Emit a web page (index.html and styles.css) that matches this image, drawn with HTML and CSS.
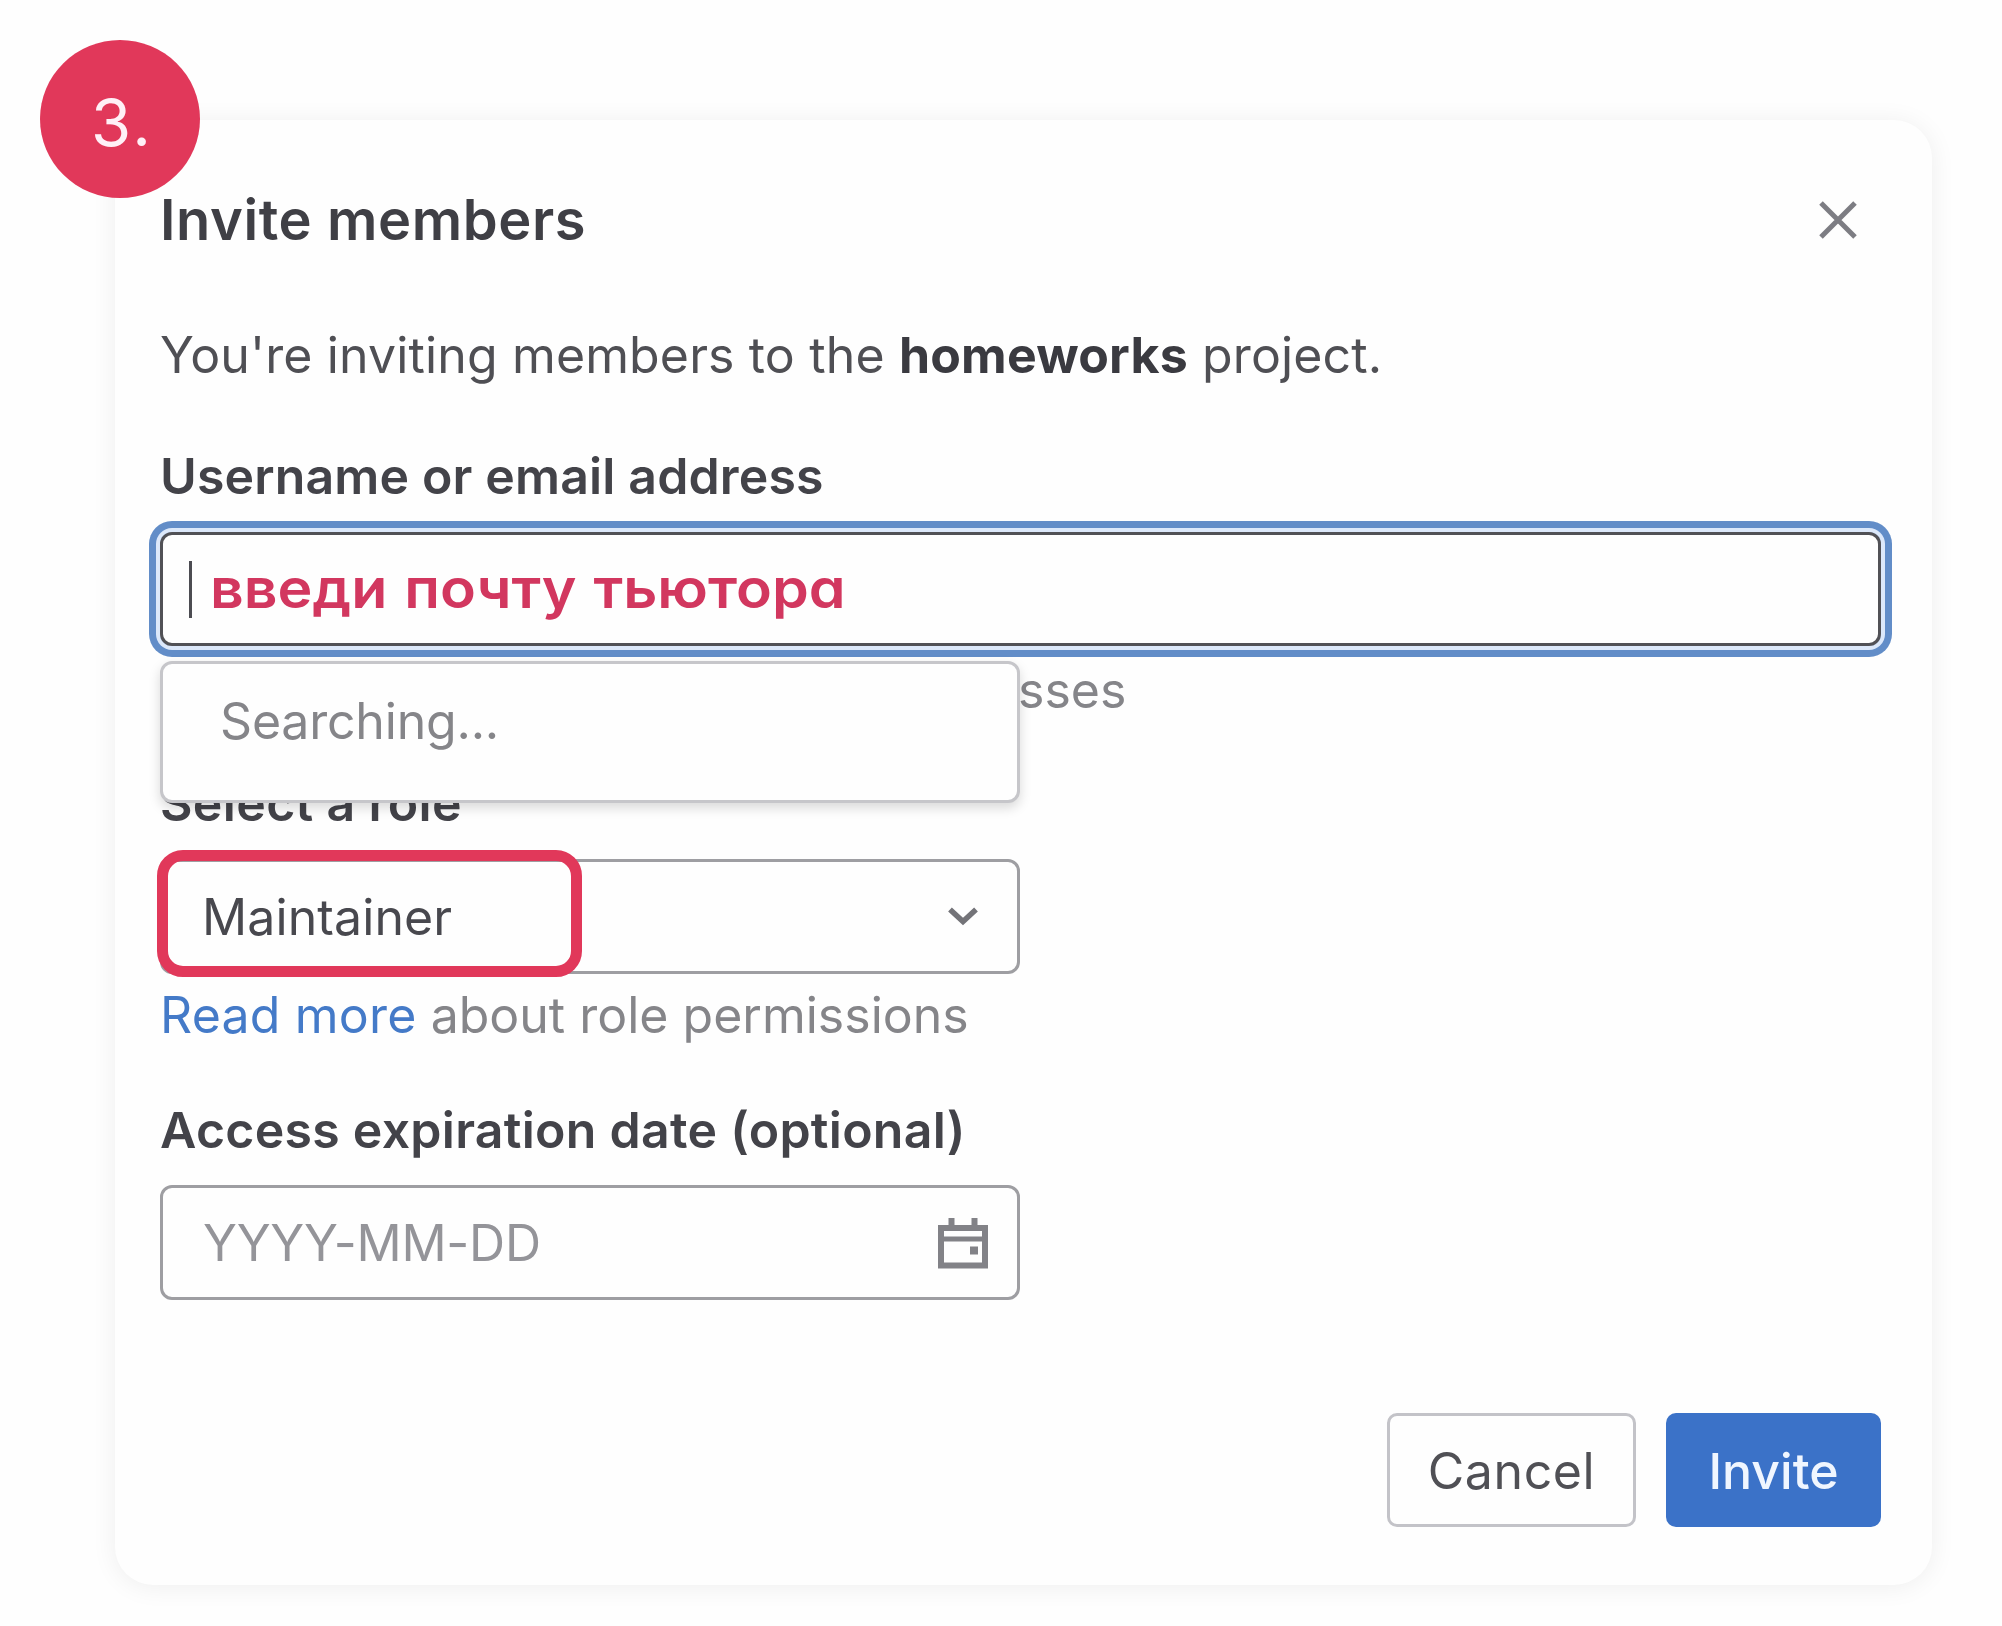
FILE: index.html
```html
<!DOCTYPE html>
<html lang="en">
<head>
<meta charset="utf-8">
<title>Invite members</title>
<link rel="stylesheet" href="styles.css">
</head>
<body>
<main class="modal">
  <div class="step">3.</div>
  <header class="modal-head">
    <h1 class="title">Invite members</h1>
    <svg class="close" viewBox="0 0 38 38" fill="none" stroke="#7d7d83" stroke-width="5"><path d="M2 2L36 36M36 2L2 36"/></svg>
  </header>
  <p class="intro">You're inviting members to the <strong>homeworks</strong> project.</p>

  <div class="label">Username or email address</div>
  <div class="token-field">
    <span class="caret"></span><span class="entry">введи почту тьютора</span>
    <div class="dropdown">Searching...</div>
  </div>
  <div class="help members-help">sses</div>

  <div class="label role-label">Select a role</div>
  <div class="control select">
    <span class="value">Maintainer</span>
    <svg class="chevron" viewBox="0 0 30 19" fill="none" stroke="#737378" stroke-width="5.5"><path d="M2 2.500L15 14.500L28 2.500"/></svg>
    <span class="highlight"></span>
  </div>
  <div class="help role-help"><a class="link">Read more</a> about role permissions</div>

  <div class="label date-label">Access expiration date (optional)</div>
  <div class="control date">
    <span class="placeholder">YYYY-MM-DD</span>
    <svg class="calendar" viewBox="0 0 50 51" fill="none" stroke="#828287"><path stroke-width="6" d="M3 10H47V47.500H3Z"/><path stroke-width="5" d="M3 21H47"/><path stroke-width="6" d="M13.500 0V10M36.500 0V10"/><path fill="#828287" stroke="none" d="M32 28.500h8v8h-8z"/></svg>
  </div>

  <footer class="actions">
    <div class="btn cancel">Cancel</div>
    <div class="btn invite">Invite</div>
  </footer>
</main>
</body>
</html>
```
FILE: styles.css
```css
* { box-sizing: border-box; }
body {
  margin: 0;
  padding: 120px 70px 41px 115px;
  background: #fefefe;
  color: #4f4f54;
  font: 400 50px/60px Inter, "Liberation Sans", sans-serif;
  overflow: hidden;
}
.modal {
  position: relative;
  height: 1465px;
  padding: 70px 51px 0 45px;
  border-radius: 38px;
  background: #fefefe;
  box-shadow: 0 2px 26px rgba(0, 0, 0, .065);
}
.step {
  position: absolute;
  left: -75px;
  top: -80px;
  width: 160px;
  height: 158px;
  padding-left: 51px;
  border-radius: 50%;
  background: #e1385a;
  color: #fff0f7;
  font-size: 65px;
  line-height: 166px;
  letter-spacing: 2.5px;
}
.modal-head { display: flex; justify-content: space-between; align-items: flex-start; }
.title { margin: 0; color: #3f3f45; font-size: 56px; font-weight: 600; line-height: 60px; letter-spacing: .6px; }
.close { width: 38px; height: 38px; margin: 11px 24px 0 0; }
.intro { margin: 75px 0 61px; letter-spacing: .14px; white-space: nowrap; }
.intro strong { color: #3a3a40; font-weight: 700; letter-spacing: .2px; }
.label { color: #434349; font-weight: 600; letter-spacing: .15px; white-space: nowrap; }
.role-label { letter-spacing: .35px; }
.date-label { letter-spacing: .27px; }
.token-field {
  position: relative;
  display: flex;
  align-items: center;
  height: 114px;
  margin-top: 26px;
  padding-left: 26px;
  border: 3px solid #515156;
  border-radius: 12px;
  box-shadow: 0 0 0 4px #dce8fa, 0 0 0 11px #628dc8;
}
.caret { width: 3px; height: 57px; background: #4c4c52; }
.entry {
  margin: 0 0 2px 18px;
  color: #d2375f;
  font-size: 55px;
  font-weight: 600;
  font-feature-settings: "cv11";
  word-spacing: 2px;
  white-space: nowrap;
  transform: scaleX(1.073);
  transform-origin: left;
}
.dropdown {
  position: absolute;
  z-index: 1;
  left: -3px;
  top: 126px;
  width: 860px;
  height: 142px;
  padding: 27px 0 0 57px;
  border: 3px solid #c6c6ca;
  border-radius: 12px;
  background: #fefefe;
  box-shadow: 0 5px 12px rgba(0, 0, 0, .15);
  color: #858589;
  letter-spacing: -.2px;
}
.help { color: #858589; letter-spacing: 0; white-space: nowrap; }
.members-help { margin: 14px 0 53px 858px; }
.control {
  position: relative;
  display: flex;
  align-items: center;
  justify-content: space-between;
  width: 860px;
  height: 115px;
  border: 3px solid #9e9ea2;
  border-radius: 12px;
}
.select { margin-top: 26px; padding: 0 39px 0 39px; letter-spacing: .1px; }
.value { color: #48484e; }
.chevron { width: 30px; height: 19px; }
.highlight {
  position: absolute;
  left: -6px;
  top: -12px;
  width: 425px;
  height: 127px;
  border: 11px solid #e1385a;
  border-radius: 26px;
}
.role-help { margin: 11px 0 55px; }
.link { color: #447ac8; letter-spacing: .2px; }
.date { margin-top: 25px; padding: 1px 29px 0 40px; }
.placeholder { color: #949499; letter-spacing: -.25px; }
.calendar { width: 50px; height: 51px; }
.actions { display: flex; justify-content: flex-end; gap: 30px; margin-top: 113px; }
.btn { display: flex; align-items: center; justify-content: center; height: 114px; padding-top: 2px; border-radius: 10px; }
.cancel { width: 249px; border: 3px solid #c3c3c8; color: #505055; letter-spacing: .6px; }
.invite { width: 215px; background: #3b72c8; color: #f0f6ff; font-weight: 500; }
```
